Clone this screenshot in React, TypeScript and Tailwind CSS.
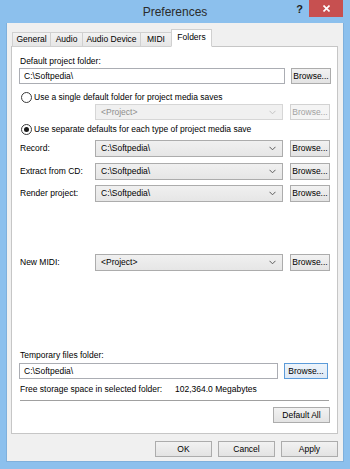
import React from 'react';

const tabs = ['General', 'Audio', 'Audio Device', 'MIDI', 'Folders'];
const tabWidths: Record<string, string> = {
  General: 'w-[39px]',
  Audio: 'w-[33px]',
  'Audio Device': 'w-[59px]',
  MIDI: 'w-[32px]',
  Folders: 'w-[41px]',
};

function Chevron({ disabled }: { disabled?: boolean }) {
  return (
    <svg width="7" height="5" viewBox="0 0 7 5" className="shrink-0">
      <path d="M0.5 0.8 L3.5 3.8 L6.5 0.8" fill="none" stroke={disabled ? '#c4c4c4' : '#5c5c5c'} strokeWidth="1" />
    </svg>
  );
}

function Browse({ disabled, focused, className = '' }: { disabled?: boolean; focused?: boolean; className?: string }) {
  let look = 'border-[#acacac] bg-gradient-to-b from-[#f2f2f2] to-[#e3e3e3] text-black';
  if (disabled) look = 'border-[#d2d2d2] bg-[#f4f4f4] text-[#a2a2a2]';
  if (focused) look = 'border-[#5b9bd9] bg-gradient-to-b from-[#edf4fb] to-[#dde9f6] text-black';
  return (
    <div className={`w-[40px] h-full shrink-0 border flex items-center justify-center leading-none ${look} ${className}`}>
      Browse...
    </div>
  );
}

function Combo({ value, disabled }: { value: string; disabled?: boolean }) {
  return (
    <div
      className={`w-[188px] h-full border flex items-center justify-between pl-[5px] pr-[6px] ${
        disabled
          ? 'border-[#d6d6d6] bg-[#f0f0f0] text-[#8e8e8e]'
          : 'border-[#acacac] bg-gradient-to-b from-[#f0f0f0] to-[#e6e6e6] text-black'
      }`}
    >
      <span>{value}</span>
      <Chevron disabled={disabled} />
    </div>
  );
}

function ComboRow({ label, value, className = '' }: { label: string; value: string; className?: string }) {
  return (
    <div className={`h-[17px] flex items-center ${className}`}>
      <div className="w-[76px] pl-[1px]">{label}</div>
      <Combo value={value} />
      <div className="w-[7px]" />
      <Browse />
    </div>
  );
}

function Radio({ checked, label, className = '' }: { checked?: boolean; label: string; className?: string }) {
  return (
    <div className={`h-[12px] flex items-center pl-[2px] ${className}`}>
      <div className="w-[11px] h-[11px] rounded-full border border-[#3a3a3a] bg-white flex items-center justify-center">
        {checked && <div className="w-[5px] h-[5px] rounded-full bg-[#1a1a1a]" />}
      </div>
      <span className="ml-[2px]">{label}</span>
    </div>
  );
}

export default function App() {
  return (
    <div className="w-[350px] h-[469px] bg-[#8cc0ed] flex flex-col font-['Liberation_Sans',Arial,sans-serif] text-[8.5px] text-black">
      {/* Title bar */}
      <div className="h-[23px] flex items-start shrink-0">
        <div className="w-[60px]" />
        <div className="flex-1 text-center text-[12px] leading-none pt-[6px] text-[#2b2b2b]">Preferences</div>
        <div className="w-[60px] flex items-start">
          <div className="w-[19px] text-center text-[11px] font-bold leading-none pt-[4px] text-[#222]">?</div>
          <div className="w-[34px] h-[17px] bg-[#c75050] flex items-center justify-center">
            <svg width="7" height="7" viewBox="0 0 7 7">
              <path d="M0.5 0.5 L6.5 6.5 M6.5 0.5 L0.5 6.5" stroke="white" strokeWidth="1.6" />
            </svg>
          </div>
        </div>
      </div>

      {/* Client area */}
      <div className="mx-[6px] mb-[7px] flex-1 bg-[#f0f0f0] border-l border-r border-b border-[#7fb0dc] flex flex-col pt-[6px] pl-[4px] pr-[5px]">
        {/* Tabs */}
        <div className="h-[18px] flex items-end pl-[1px] -mb-px relative z-10">
          {tabs.map((t, i) => {
            const selected = t === 'Folders';
            return (
              <div
                key={t}
                className={`${tabWidths[t]} ${i > 0 ? '-ml-px' : ''} border border-[#d0d0d0] flex items-center justify-center leading-none ${
                  selected
                    ? 'h-[18px] bg-white border-b-white pb-[2px]'
                    : 'h-[15px] bg-gradient-to-b from-[#f2f2f2] to-[#e6e6e6] border-b-[#d0d0d0]'
                }`}
              >
                {t}
              </div>
            );
          })}
        </div>

        {/* Panel */}
        <div className="h-[388px] bg-white border border-[#c6c6c6] flex flex-col pl-[7px] pr-[6px]">
          <div className="mt-[9px] h-[11px] pl-[1px] leading-[11px]">Default project folder:</div>
          <div className="mt-[1px] h-[16px] flex">
            <div className="flex-1 border border-[#abadb3] bg-white flex items-center pl-[4px]">C:\Softpedia\</div>
            <div className="w-[6px]" />
            <Browse />
          </div>

          <Radio className="mt-[7px]" label="Use a single default folder for project media saves" />
          <div className="mt-[1px] h-[16px] flex">
            <div className="w-[76px]" />
            <Combo value="<Project>" disabled />
            <div className="w-[7px]" />
            <Browse disabled />
          </div>

          <Radio checked className="mt-[3px]" label="Use separate defaults for each type of project media save" />

          <ComboRow className="mt-[5px]" label="Record:" value="C:\Softpedia\" />
          <ComboRow className="mt-[6px]" label="Extract from CD:" value="C:\Softpedia\" />
          <ComboRow className="mt-[5px]" label="Render project:" value="C:\Softpedia\" />

          <ComboRow className="mt-[52px]" label="New MIDI:" value="<Project>" />

          <div className="mt-[79px] h-[11px] pl-[1px] leading-[11px]">Temporary files folder:</div>
          <div className="mt-[2px] h-[16px] flex pr-[3px]">
            <div className="flex-1 border border-[#abadb3] bg-white flex items-center pl-[4px]">C:\Softpedia\</div>
            <div className="w-[6px]" />
            <Browse focused className="w-[44px]" />
          </div>
          <div className="mt-[5px] h-[11px] flex items-center pl-[1px]">
            <span className="w-[155px]">Free storage space in selected folder:</span>
            <span>102,364.0 Megabytes</span>
          </div>
          <div className="mt-[5px] h-px bg-[#a0a0a0] mr-[2px] ml-[1px]" />
          <div className="mt-[6px] h-[16px] flex justify-end pr-[1px]">
            <div className="w-[57px] h-full border border-[#acacac] bg-gradient-to-b from-[#f2f2f2] to-[#e3e3e3] flex items-center justify-center">
              Default All
            </div>
          </div>
        </div>

        {/* Dialog buttons */}
        <div className="mt-[7px] h-[16px] flex justify-end gap-[6px]">
          {['OK', 'Cancel', 'Apply'].map((b) => (
            <div
              key={b}
              className="w-[57px] h-full border border-[#acacac] bg-gradient-to-b from-[#f2f2f2] to-[#e3e3e3] flex items-center justify-center"
            >
              {b}
            </div>
          ))}
        </div>
      </div>
    </div>
  );
}
